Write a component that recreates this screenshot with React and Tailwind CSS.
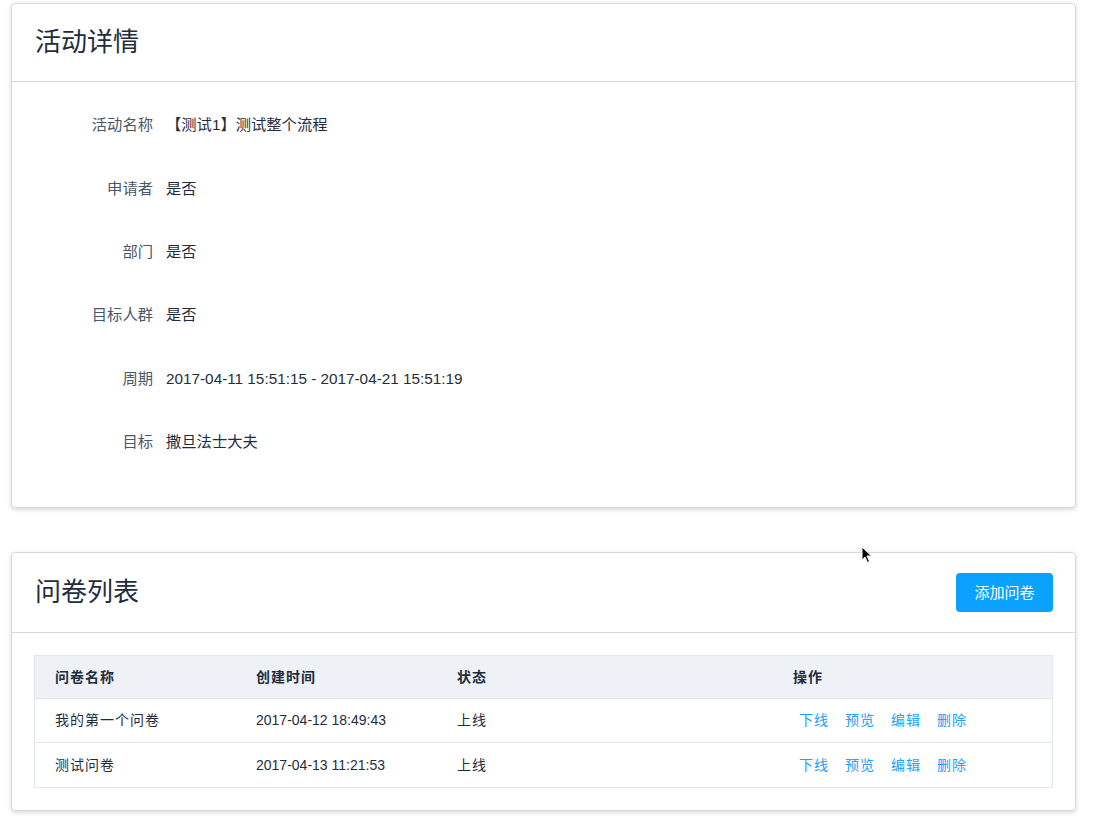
const font = { fontFamily: '"Liberation Sans", "Noto Sans CJK SC", sans-serif' }

const details = [
  ['活动名称', '【测试1】测试整个流程'],
  ['申请者', '是否'],
  ['部门', '是否'],
  ['目标人群', '是否'],
  ['周期', '2017-04-11 15:51:15 - 2017-04-21 15:51:19'],
  ['目标', '撒旦法士大夫'],
]

const surveys = [
  ['我的第一个问卷', '2017-04-12 18:49:43', '上线'],
  ['测试问卷', '2017-04-13 11:21:53', '上线'],
]

const Card = ({ title, action, headerClass, children }) => (
  <div className="bg-white border border-[#d1dbe5] rounded shadow-[0_2px_4px_rgba(0,0,0,0.12),0_0_6px_rgba(0,0,0,0.04)]">
    <div className={`flex items-center justify-between pl-[23px] pr-[22px] border-b border-[#d1dbe5] ${headerClass}`}>
      <span className="text-[26px] text-[#1f2d3d]">{title}</span>
      {action}
    </div>
    {children}
  </div>
)

const App = () => {
  return (
    <div className="relative bg-white min-h-[818px] pl-[11px] pr-[27px] pt-[3px]" style={font}>
      <Card title="活动详情" headerClass="h-[78px]">
        <div className="pt-[12px] pb-[33px]">
          {details.map(([label, value]) => (
            <div key={label} className="h-[63.4px] flex items-center text-[15.3px]">
              <span className="w-[141px] text-right text-[#48576a]">{label}</span>
              <span className="ml-[13px] text-[#1f2d3d]">{value}</span>
            </div>
          ))}
        </div>
      </Card>

      <div className="h-[44px]" />

      <Card
        title="问卷列表"
        headerClass="h-[80px]"
        action={
          <button className="h-[39px] w-[97px] rounded bg-[#0ba2ff] text-white text-[15px]">添加问卷</button>
        }
      >
        <div className="px-[22px] pt-[22px] pb-[22px]">
          <div className="border border-[#dfe6ec] text-[14px]">
            <div className="h-[43px] flex items-center bg-[#eef1f6] font-bold text-[#1f2d3d] border-b border-[#dfe6ec] tracking-[1px]">
              <span className="w-[201px] pl-[20px]">问卷名称</span>
              <span className="w-[201px] pl-[20px]">创建时间</span>
              <span className="w-[336px] pl-[20px]">状态</span>
              <span className="pl-[20px]">操作</span>
            </div>
            {surveys.map(([name, time, status], i) => (
              <div key={name} className={`h-[44px] flex items-center text-[#1f2d3d] ${i === 0 ? 'border-b border-[#dfe6ec]' : ''}`}>
                <span className="w-[201px] pl-[20px] tracking-[1px]">{name}</span>
                <span className="w-[201px] pl-[20px]">{time}</span>
                <span className="w-[336px] pl-[20px] tracking-[1px]">{status}</span>
                <span className="pl-[26px] flex gap-[16px] text-[#20a0ff] tracking-[1px]">
                  <a>下线</a>
                  <a>预览</a>
                  <a>编辑</a>
                  <a>删除</a>
                </span>
              </div>
            ))}
          </div>
        </div>
      </Card>

      {/* mouse pointer caught in the screenshot */}
      <svg className="absolute left-[861px] top-[546px]" width="12" height="18" viewBox="0 0 12 18">
        <path d="M1 1 L1 14 L4 11 L6.5 16.5 L8.5 15.5 L6 10 L10.5 10 Z" fill="#000" stroke="#fff" strokeWidth="1" />
      </svg>
    </div>
  )
}

export default App
